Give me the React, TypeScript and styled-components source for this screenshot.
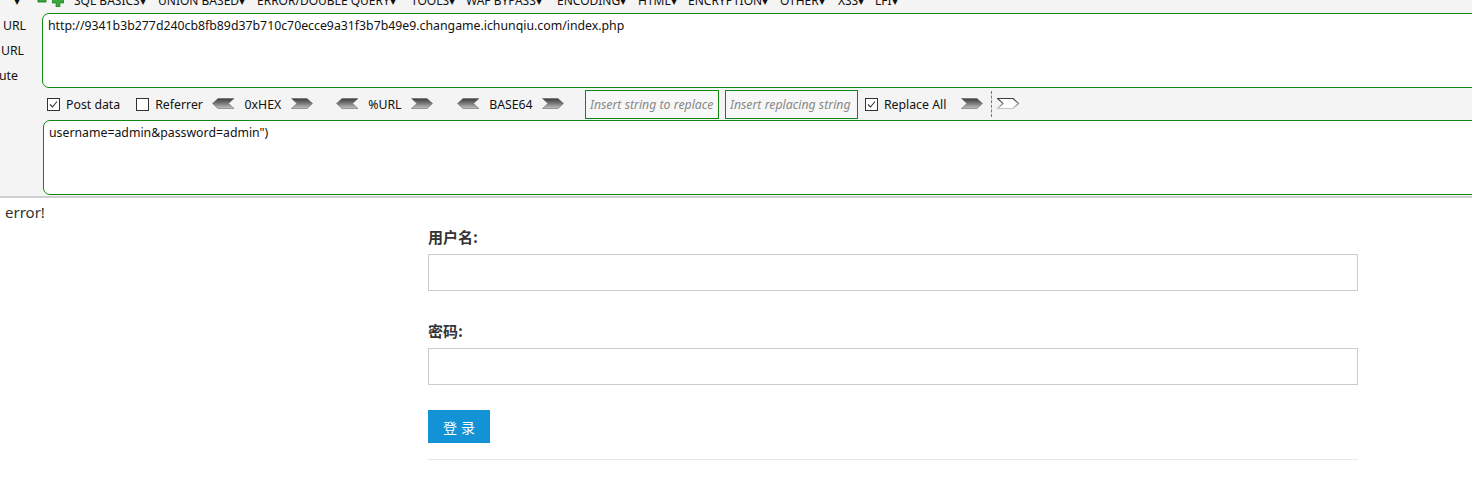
import React from "react";
import styled, { createGlobalStyle } from "styled-components";

const Global = createGlobalStyle`
  html, body { margin: 0; padding: 0; background: #fff; }
  body { font-family: "Noto Sans", "Open Sans", "Noto Sans CJK SC", sans-serif; color: #222; overflow: hidden; }
`;

const HackBar = styled.div`
  background: #f4f4f4;
  border-bottom: 2px solid #cfcfcf;
  overflow: hidden;
  padding-bottom: 1px;
`;

const MenuRow = styled.div`
  display: flex;
  align-items: center;
  height: 22px;
  margin-top: -10px;
  padding-left: 14px;
  font-size: 12px;
  color: #111;
  white-space: nowrap;
  line-height: 22px;
`;

const MenuItem = styled.span<{ $w: number }>`
  display: inline-block;
  width: ${(p) => p.$w}px;
  flex: none;
`;

const IconSlot = styled.span`
  display: inline-flex;
  width: 15px;
  flex: none;
  align-items: center;
`;

const Body = styled.div`
  display: grid;
  grid-template-columns: 42px 1fr;
  margin-top: 1px;
`;

const Buttons = styled.div`
  display: flex;
  flex-direction: column;
  overflow: hidden;
  height: 75px;
`;

const SideButton = styled.div<{ $pr: number }>`
  display: flex;
  justify-content: flex-end;
  align-items: center;
  height: 25px;
  font-size: 12.3px;
  white-space: nowrap;
  padding-right: ${(p) => p.$pr}px;
  color: #111;
`;

const TextArea = styled.div<{ $ml: number }>`
  box-sizing: border-box;
  height: 75px;
  margin-left: ${(p) => p.$ml}px;
  margin-right: -10px;
  background: #fff;
  border: 1px solid #118611;
  border-radius: 7px 0 0 7px;
  padding: 3px 5px;
  font-size: 12.3px;
  line-height: 18px;
  color: #111;
  white-space: nowrap;
  overflow: hidden;
`;

const Toolbar = styled.div`
  display: flex;
  align-items: center;
  height: 32px;
  padding-left: 5px;
  font-size: 12.3px;
  color: #111;
  white-space: nowrap;
`;

const Check = styled.span<{ $ml?: number }>`
  display: inline-flex;
  align-items: center;
  margin-left: ${(p) => p.$ml ?? 0}px;
  gap: 6px;
`;

const Box = styled.span`
  width: 11px;
  height: 11px;
  border: 1px solid #333;
  background: #fff;
  display: inline-flex;
  align-items: center;
  justify-content: center;
`;

const EncGroup = styled.span<{ $ml: number }>`
  display: inline-flex;
  align-items: center;
  margin-left: ${(p) => p.$ml}px;
`;

const EncLabel = styled.span<{ $w: number }>`
  display: inline-block;
  width: ${(p) => p.$w}px;
  text-align: center;
`;

const ReplaceInput = styled.div<{ $w: number; $ml: number }>`
  width: ${(p) => p.$w}px;
  margin-left: ${(p) => p.$ml}px;
  border: 1px solid #118611;
  box-sizing: border-box;
  height: 29px;
  background: #f7f7f7;
  font-style: italic;
  color: #888;
  font-size: 12.3px;
  line-height: 27px;
  padding-left: 4px;
  overflow: hidden;
  white-space: nowrap;
`;

const Divider = styled.span`
  display: inline-block;
  height: 26px;
  margin: 0 5px 0 7px;
  border-left: 1px dashed #777;
`;

const Page = styled.div`
  padding: 3px 0 0 5px;
  font-family: "Noto Sans", "Open Sans", "Noto Sans CJK SC", sans-serif;
  font-size: 15px;
  color: #333;
`;

const ErrorText = styled.div`
  line-height: 22px;
`;

const Form = styled.div`
  width: 930px;
  margin-left: 423px;
  padding-top: 3px;
`;

const Label = styled.div<{ $mt: number }>`
  margin-top: ${(p) => p.$mt}px;
  font-family: "Noto Sans CJK SC", sans-serif;
  font-weight: 700;
  font-size: 15px;
  line-height: 22px;
  color: #333;
`;

const Field = styled.div`
  margin-top: 6px;
  height: 35px;
  border: 1px solid #ccc;
  background: #fff;
`;

const Submit = styled.button`
  margin-top: 25px;
  width: 62px;
  height: 33px;
  border: none;
  background: #1393d6;
  color: #fff;
  font-family: "Noto Sans CJK SC", sans-serif;
  font-size: 14px;
  letter-spacing: 4px;
  padding: 0 0 0 4px;
  display: block;
`;

const Rule = styled.div`
  margin-top: 16px;
  border-top: 1px solid #e8e8e8;
`;

const Arrow: React.FC<{ dir: "left" | "right"; hollow?: boolean; id: string }> = ({ dir, hollow, id }) => {
  const pts =
    dir === "left"
      ? "0.5,5.5 6,0.5 22,0.5 16.5,5.5 22,10.5 6,10.5"
      : "0.5,0.5 16,0.5 21.5,5.5 16,10.5 0.5,10.5 6,5.5";
  return (
    <svg width="23" height="12" viewBox="0 0 23 12">
      <defs>
        <linearGradient id={id} x1="0" y1="0" x2="0" y2="1">
          <stop offset="0" stopColor="#3c3c3c" />
          <stop offset="0.5" stopColor="#7a7a7a" />
          <stop offset="1" stopColor="#c4c4c4" />
        </linearGradient>
      </defs>
      {hollow ? (
        <polygon points={pts} fill="#fff" stroke={`url(#${id})`} strokeWidth="1.2" />
      ) : (
        <polygon points={pts} fill={`url(#${id})`} stroke="#666" strokeWidth="0.6" />
      )}
    </svg>
  );
};

const Tick = () => (
  <svg width="11" height="11" viewBox="0 0 11 11">
    <polyline points="2,5.5 4.5,8 9,2.5" fill="none" stroke="#333" strokeWidth="1.1" />
  </svg>
);

const menu: [string, number][] = [
  ["SQL BASICS▾", 84],
  ["UNION BASED▾", 99],
  ["ERROR/DOUBLE QUERY▾", 154],
  ["TOOLS▾", 55],
  ["WAF BYPASS▾", 91],
  ["ENCODING▾", 81],
  ["HTML▾", 50],
  ["ENCRYPTION▾", 92],
  ["OTHER▾", 58],
  ["XSS▾", 37],
  ["LFI▾", 30],
];

export default function App() {
  return (
    <>
      <Global />
      <HackBar>
        <MenuRow>
          <MenuItem $w={23}>▾</MenuItem>
          <IconSlot>
            <svg width="10" height="10" viewBox="0 0 10 10">
              <rect x="1" y="0" width="8" height="6" fill="#3aa83a" stroke="#1d6e1d" strokeWidth="0.8" />
            </svg>
          </IconSlot>
          <IconSlot>
            <svg width="12" height="12" viewBox="0 0 12 12">
              <path d="M4 0h4v4h4v4H8v4H4V8H0V4h4z" fill="#3aa83a" stroke="#1d6e1d" strokeWidth="0.6" />
            </svg>
          </IconSlot>
          <MenuItem $w={7} />
          {menu.map(([t, w]) => (
            <MenuItem key={t} $w={w}>
              {t}
            </MenuItem>
          ))}
        </MenuRow>
        <Body>
          <Buttons>
            <SideButton $pr={16}>Load URL</SideButton>
            <SideButton $pr={18}>Split URL</SideButton>
            <SideButton $pr={24}>Execute</SideButton>
          </Buttons>
          <TextArea $ml={0}>
            http://9341b3b277d240cb8fb89d37b710c70ecce9a31f3b7b49e9.changame.ichunqiu.com/index.php
          </TextArea>
          <div />
          <Toolbar>
            <Check>
              <Box>
                <Tick />
              </Box>
              Post data
            </Check>
            <Check $ml={16}>
              <Box />
              Referrer
            </Check>
            <EncGroup $ml={9}>
              <Arrow dir="left" id="a1" />
              <EncLabel $w={56}>0xHEX</EncLabel>
              <Arrow dir="right" id="a2" />
            </EncGroup>
            <EncGroup $ml={22}>
              <Arrow dir="left" id="a3" />
              <EncLabel $w={52}>%URL</EncLabel>
              <Arrow dir="right" id="a4" />
            </EncGroup>
            <EncGroup $ml={23}>
              <Arrow dir="left" id="a5" />
              <EncLabel $w={62}>BASE64</EncLabel>
              <Arrow dir="right" id="a6" />
            </EncGroup>
            <ReplaceInput $w={134} $ml={20}>
              Insert string to replace
            </ReplaceInput>
            <ReplaceInput $w={133} $ml={6}>
              Insert replacing string
            </ReplaceInput>
            <Check $ml={7}>
              <Box>
                <Tick />
              </Box>
              Replace All
            </Check>
            <EncGroup $ml={15}>
              <Arrow dir="right" id="a7" />
            </EncGroup>
            <Divider />
            <Arrow dir="right" hollow id="a8" />
          </Toolbar>
          <div />
          <TextArea $ml={1}>username=admin&amp;password=admin")</TextArea>
        </Body>
      </HackBar>
      <Page>
        <ErrorText>error!</ErrorText>
        <Form>
          <Label $mt={0}>用户名:</Label>
          <Field />
          <Label $mt={29}>密码:</Label>
          <Field />
          <Submit>登录</Submit>
          <Rule />
        </Form>
      </Page>
    </>
  );
}
